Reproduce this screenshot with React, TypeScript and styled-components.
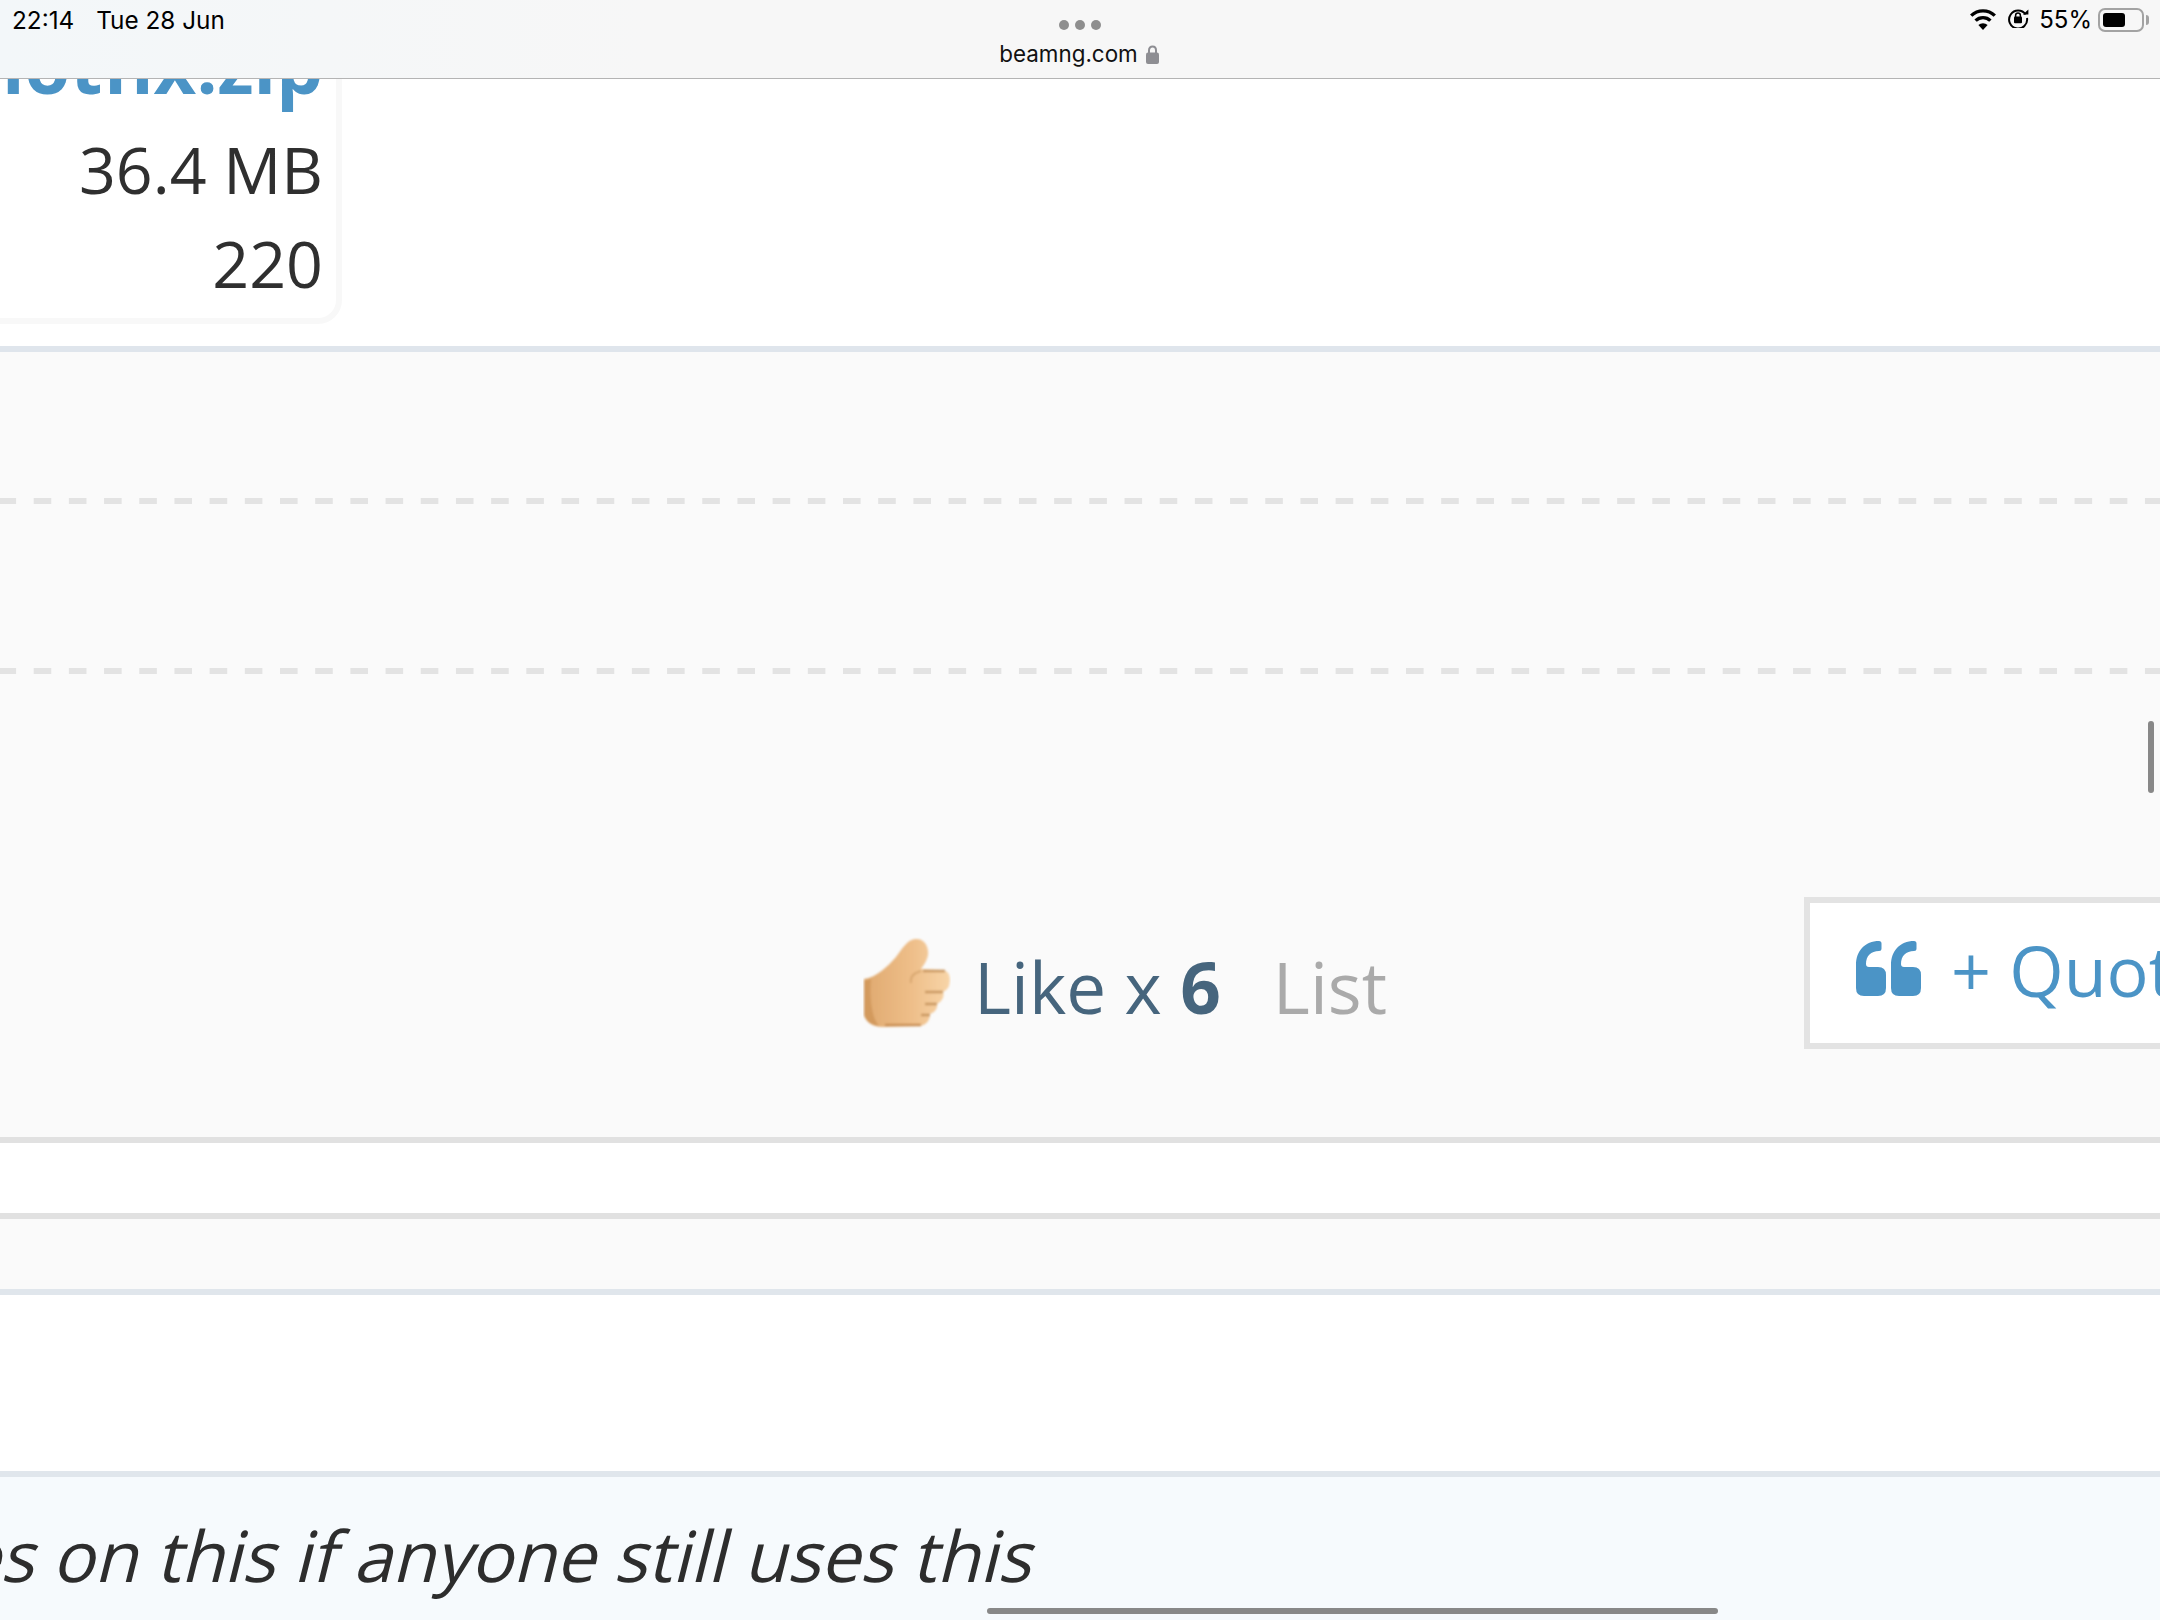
import { createGlobalStyle } from "styled-components";
import styled from "styled-components";

const GlobalStyle = createGlobalStyle`
  html, body {
    margin: 0;
    padding: 0;
    background: #ffffff;
  }
`;

const QUOTE_MARK =
  "M23 0C9 0 0 10 0 24V47Q0 55 8 55H22Q30 55 30 47V34Q30 26 22 26H13Q10 26 10 23C10 15 15 10 23 10Q25.5 10 25.5 7.5V2.5Q25.5 0 23 0Z";

export default function App() {
  return (
    <>
      <GlobalStyle />
      <Screen>
        <StatusBar>
          <Clock>
            <span>22:14</span>
            <span>Tue 28 Jun</span>
          </Clock>
          <AddressBlock>
            <Dots>
              <Dot />
              <Dot />
              <Dot />
            </Dots>
            <Address>
              beamng.com
              <svg width="13" height="19" viewBox="0 0 13 19">
                <path
                  d="M3 8V5.2C3 3 4.5 1.4 6.5 1.4S10 3 10 5.2V8"
                  fill="none"
                  stroke="#8e8e93"
                  strokeWidth="2"
                />
                <rect x="0" y="7.5" width="13" height="11.5" rx="2" fill="#8e8e93" />
              </svg>
            </Address>
          </AddressBlock>
          <StatusIcons>
            <svg width="28" height="22" viewBox="0 0 28 22">
              <path d="M14 22l-4.6-5a6.6 6.6 0 0 1 9.2 0z" fill="#000" />
              <path
                d="M6.6 12.6a10.6 10.6 0 0 1 14.8 0M2.2 7.6a17 17 0 0 1 23.6 0"
                fill="none"
                stroke="#000"
                strokeWidth="3.4"
              />
            </svg>
            <svg width="22" height="20" viewBox="0 0 22 20">
              <path
                d="M18.6 6.5A9 9 0 1 0 20 10"
                fill="none"
                stroke="#000"
                strokeWidth="2"
              />
              <path d="M15.8 6.6h5.6V1.4z" fill="#000" />
              <path
                d="M8.6 9V7.4a2.4 2.4 0 0 1 4.8 0V9"
                fill="none"
                stroke="#000"
                strokeWidth="1.5"
              />
              <rect x="7" y="8.6" width="8" height="6.6" rx="1" fill="#000" />
            </svg>
            <Percent>55%</Percent>
            <Battery>
              <BatteryFill />
            </Battery>
          </StatusIcons>
        </StatusBar>

        <AttachmentArea>
          <AttachmentCard>
            <FileName>hotfix.zip</FileName>
            <FileMeta>36.4 MB</FileMeta>
            <FileMeta>220</FileMeta>
          </AttachmentCard>
        </AttachmentArea>

        <PostFooter>
          <DashedRule $top={146} />
          <DashedRule $top={164} />
          <ActionRow>
            <Likes>
              <ThumbIcon width="88" height="92" viewBox="0 0 88 92">
                <defs>
                  <linearGradient id="palm" x1="0" y1="0" x2="1" y2="0">
                    <stop offset="0" stopColor="#dfa96f" />
                    <stop offset="0.55" stopColor="#eebe89" />
                    <stop offset="1" stopColor="#f8d5a8" />
                  </linearGradient>
                  <filter id="soft">
                    <feGaussianBlur stdDeviation="1.3" />
                  </filter>
                </defs>
                <g filter="url(#soft)">
                  <path
                    d="M1 42C14 40 24 30 33 20C39 12 44 3 52 2C61 1 66 9 65 18C64 24 60 29 58 32L80 33C87 34 88 42 86 49C85 52 82 54 80 55C82 60 78 65 74 67C75 72 71 76 67 77C67 84 63 88 57 89L20 90C9 90 1 84 1 76Z"
                    fill="url(#palm)"
                  />
                  <path d="M1 44V78C3 84 8 88 16 89C9 82 6 60 8 42Z" fill="#d39a5d" />
                  <path
                    d="M60 34H82M62 55H80M62 67H74M58 78H67"
                    stroke="#c9975f"
                    strokeWidth="2.4"
                    fill="none"
                  />
                  <path d="M58 34C50 36 47 40 48 46" stroke="#d9a871" strokeWidth="2" fill="none" />
                  <path d="M22 88H58" stroke="#c98f54" strokeWidth="2.4" fill="none" />
                </g>
              </ThumbIcon>
              <LikeText>
                Like x <strong>6</strong>
              </LikeText>
              <ListLink>List</ListLink>
            </Likes>
            <QuoteButton>
              <QuoteIcon width="65" height="55" viewBox="0 0 65 55">
                <path d={QUOTE_MARK} fill="#4b94c6" />
                <path transform="translate(35 0)" d={QUOTE_MARK} fill="#4b94c6" />
              </QuoteIcon>
              <QuoteLabel>+ Quote</QuoteLabel>
            </QuoteButton>
          </ActionRow>
        </PostFooter>

        <WhiteGap />
        <GreyStrip />
        <WhiteBlock />
        <QuotedMessage>
          <QuotedText>updates on this if anyone still uses this</QuotedText>
        </QuotedMessage>

        <VerticalScroll />
        <HorizontalScroll />
      </Screen>
    </>
  );
}

const Screen = styled.div`
  position: relative;

  display: flex;
  flex-direction: column;

  width: 2160px;
  height: 1620px;

  overflow: hidden;

  background-color: #ffffff;

  font-family: "Open Sans", "Liberation Sans", sans-serif;
`;

const StatusBar = styled.div`
  position: relative;
  z-index: 2;

  flex: none;
  display: grid;
  grid-template-columns: 1fr auto 1fr;

  height: 78px;
  padding: 0 10px 0 12px;
  box-sizing: border-box;

  background: linear-gradient(90deg, #f3f7f9 0%, #f7f7f7 30%);
  box-shadow: 0 1px 0 #b4b4b4;

  font-family: Inter, "Liberation Sans", sans-serif;
  color: #000000;
`;

const Clock = styled.div`
  display: flex;
  gap: 22px;

  padding-top: 6px;

  font-size: 24.3px;
  line-height: 28px;
`;

const AddressBlock = styled.div`
  display: flex;
  flex-direction: column;
  align-items: center;

  padding-top: 20px;
  padding-right: 2px;
`;

const Dots = styled.div`
  display: flex;
  gap: 6px;
`;

const Dot = styled.div`
  width: 10px;
  height: 10px;

  border-radius: 50%;
  background-color: #8e8e8e;
`;

const Address = styled.div`
  display: flex;
  align-items: center;
  gap: 8px;

  margin-top: 10px;
  margin-right: 2px;

  font-size: 22.4px;
  line-height: 28px;
  color: #111111;
`;

const StatusIcons = styled.div`
  display: flex;
  justify-content: flex-end;
  align-items: flex-start;
  gap: 10px;

  padding-top: 8px;
`;

const Percent = styled.div`
  font-size: 24px;
  line-height: 24px;
  margin-right: -4px;
`;

const Battery = styled.div`
  position: relative;

  width: 46px;
  height: 24px;
  padding: 3px;
  margin-right: 6px;
  box-sizing: border-box;

  border: 2px solid #a3a3a3;
  border-radius: 7px;

  &::after {
    content: "";
    position: absolute;
    top: 5px;
    right: -7px;
    width: 3px;
    height: 10px;
    border-radius: 0 3px 3px 0;
    background-color: #a3a3a3;
  }
`;

const BatteryFill = styled.div`
  width: 22px;
  height: 100%;

  border-radius: 3px;
  background-color: #000000;
`;

const AttachmentArea = styled.div`
  flex: none;
  height: 268px;

  border-bottom: 6px solid #dfe5ec;
`;

const AttachmentCard = styled.div`
  display: flex;
  flex-direction: column;
  align-items: flex-end;

  width: 342px;
  margin-top: -56px;
  padding: 0 13px 8px 0;
  box-sizing: border-box;

  overflow: hidden;

  border: 6px solid #f8f8f8;
  border-left: none;
  border-radius: 0 0 24px 0;

  background-color: #ffffff;
`;

const FileName = styled.div`
  margin-bottom: 19px;

  font-size: 74px;
  font-weight: 700;
  line-height: 75px;
  white-space: nowrap;
  color: #4b94c6;
`;

const FileMeta = styled.div`
  font-size: 64.5px;
  line-height: 94px;
  white-space: nowrap;
  color: #2f2f2f;
`;

const PostFooter = styled.div`
  flex: none;
  display: flex;
  flex-direction: column;

  height: 785px;

  background-color: #fafafa;
  border-bottom: 6px solid #e1e1e1;
`;

const DashedRule = styled.div<{ $top: number }>`
  flex: none;
  height: 6px;
  margin-top: ${(props) => props.$top}px;

  background-image: linear-gradient(90deg, #e3e3e3 0 18px, transparent 18px 35.2px);
  background-size: 35.2px 6px;
  background-position: -1.5px 0;
`;

const ActionRow = styled.div`
  display: flex;
  justify-content: space-between;
  align-items: flex-start;

  margin-top: 223px;
  padding-left: 863px;
`;

const Likes = styled.div`
  display: flex;
  align-items: center;

  margin-top: 41px;
`;

const ThumbIcon = styled.svg`
  flex: none;
  margin-top: -3px;
`;

const LikeText = styled.div`
  position: relative;
  top: 3px;

  margin-left: 23px;

  font-size: 71px;
  line-height: 92px;
  color: #46657d;

  strong {
    font-weight: 700;
  }
`;

const ListLink = styled.div`
  position: relative;
  top: 3px;

  margin-left: 52px;

  font-size: 71px;
  line-height: 92px;
  color: #aaaaaa;
`;

const QuoteButton = styled.div`
  flex: none;
  display: flex;
  align-items: center;
  gap: 30px;

  width: 356px;
  height: 152px;
  padding-left: 46px;
  box-sizing: border-box;

  border: 6px solid #e3e3e3;
  border-right: none;

  background-color: #ffffff;

  overflow: hidden;
`;

const QuoteIcon = styled.svg`
  flex: none;
  margin-top: -9px;
`;

const QuoteLabel = styled.span`
  margin-top: -6px;

  font-size: 70px;
  white-space: nowrap;
  color: #4b94c6;
`;

const WhiteGap = styled.div`
  flex: none;
  height: 70px;

  background-color: #ffffff;
  border-bottom: 6px solid #e1e1e1;
`;

const GreyStrip = styled.div`
  flex: none;
  height: 70px;

  background-color: #fafafa;
  border-bottom: 6px solid #e0e6ec;
`;

const WhiteBlock = styled.div`
  flex: none;
  height: 176px;

  background-color: #ffffff;
  border-bottom: 6px solid #e0e6ec;
`;

const QuotedMessage = styled.div`
  flex: 1;
  display: flex;
  justify-content: flex-start;

  overflow: hidden;

  background-color: #f6fafd;
`;

const QuotedText = styled.div`
  margin-left: -229px;
  padding-top: 31px;

  font-size: 70.3px;
  line-height: 94px;
  white-space: nowrap;
  color: #2d2d2d;

  transform: skewX(-14deg);
  transform-origin: 0 90px;
`;

const VerticalScroll = styled.div`
  position: absolute;
  top: 721px;
  right: 6px;

  width: 6px;
  height: 72px;

  border-radius: 3px;
  background-color: #888888;
`;

const HorizontalScroll = styled.div`
  position: absolute;
  top: 1608px;
  left: 987px;

  width: 731px;
  height: 6px;

  border-radius: 3px;
  background-color: #888888;
`;
